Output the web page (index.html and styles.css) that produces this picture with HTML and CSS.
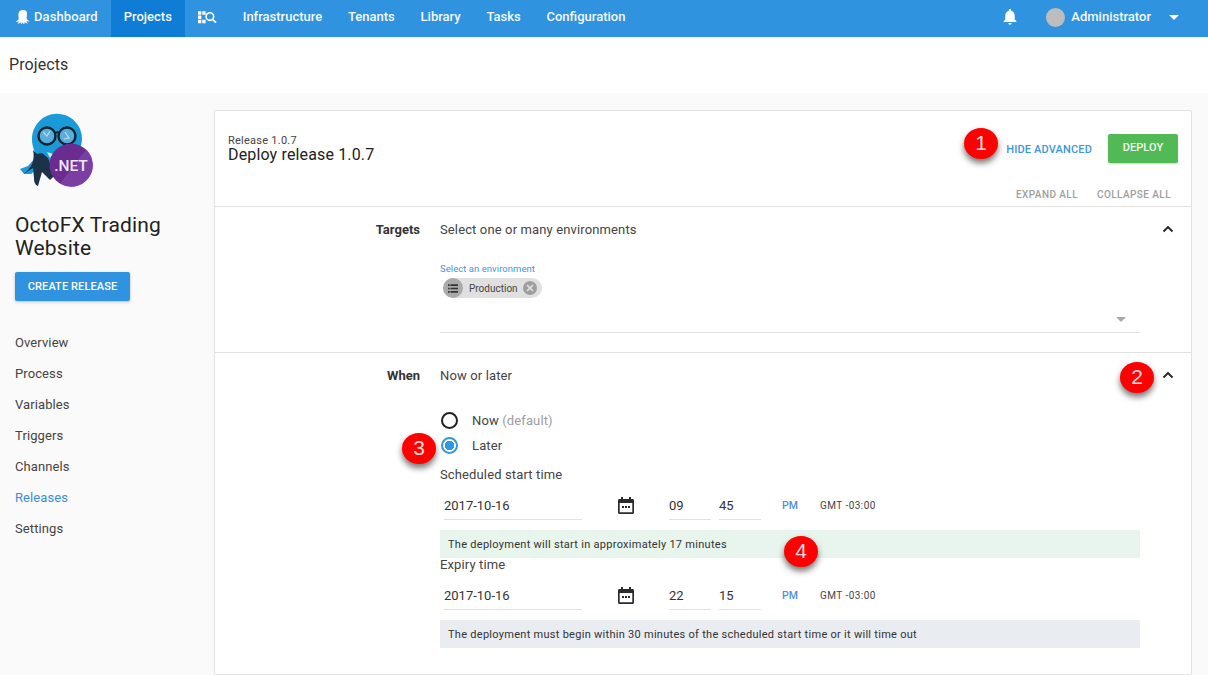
FILE: index.html
```html
<!DOCTYPE html>
<html lang="en">
<head>
<meta charset="utf-8">
<title>Deploy release 1.0.7</title>
<link rel="stylesheet" href="styles.css">
</head>
<body>
<nav class="nav">
  <a class="nav-item nav-first"><svg class="octo" viewBox="0 0 16 16"><path fill="#fff" d="M8 1C5 1 3.400 3 3.400 5.600c0 2 .5 3.100.2 4.300C3.300 11 2 11.800.6 12.200c.9.700 2.300.600 3.200.100-.2 1-.7 1.700-1.300 2.200 1.100.200 2.400-.300 3-1.300.2.800.5 1.500 1 1.900.6-.3 1-1 1.100-1.800.3.900.8 1.500 1.500 1.800.5-.5.700-1.200.7-2 .7 1 1.900 1.500 3 1.300-.700-.6-1.200-1.300-1.300-2.300.9.500 2.300.600 3.200-.1-1.400-.4-2.700-1.200-3-2.300-.3-1.200.3-2.300.2-4.300C12.600 3 11 1 8 1z"/></svg>Dashboard</a>
  <a class="nav-item nav-active">Projects</a>
  <a class="nav-item nav-icon"><svg class="nav-search" viewBox="0 0 20 14"><path fill="#fff" d="M0 1h3.500v3.500H0zM4.500 1H8v3.500H4.500zM0 5.500h3.500V9H0zM0 10h3.500v3.500H0zM4.500 10H8v3.500H4.500z"/><circle cx="12.500" cy="6.500" r="4" fill="none" stroke="#fff" stroke-width="1.700"/><path stroke="#fff" stroke-width="1.900" d="M15.300 9.500l3.700 3.500"/></svg></a>
  <a class="nav-item">Infrastructure</a>
  <a class="nav-item">Tenants</a>
  <a class="nav-item">Library</a>
  <a class="nav-item">Tasks</a>
  <a class="nav-item">Configuration</a>
  <div class="nav-right">
    <svg class="bell" viewBox="0 0 14 16"><path fill="#fff" d="M7 0c-.7 0-1.200.5-1.200 1.200v.5C3.700 2.300 2.300 4.200 2.300 6.500v3.800L.6 12.200V13h12.800v-.8l-1.700-1.900V6.500c0-2.300-1.400-4.200-3.500-4.800v-.5C8.200.5 7.700 0 7 0zM5.300 14c0 1 .8 1.700 1.700 1.700s1.700-.7 1.700-1.700z"/></svg>
    <span class="avatar"></span>
    <span class="nav-user">Administrator</span>
    <span class="nav-caret"></span>
  </div>
</nav>
<header class="title-bar">Projects</header>
<div class="layout">
  <aside class="sidebar">
    <svg class="logo" viewBox="0 0 80 76">
      <path fill="#1b9ad8" d="M2 56l8-3 7-8 4 10-8 6-7 0z"/>
      <path fill="#1b9ad8" d="M14 26a25 25 0 1 1 44 16L40 52 22 46c-5-5-8-12-8-20z"/>
      <circle cx="29" cy="23" r="8.500" fill="#5aaedb" stroke="#14232f" stroke-width="2.400"/>
      <circle cx="49" cy="23" r="8.500" fill="#5aaedb" stroke="#14232f" stroke-width="2.400"/>
      <path d="M25 19l4 4 3-5M47 19l4 6-5 1" fill="none" stroke="#bcdcf0" stroke-width="1.200"/>
      <path stroke="#14232f" stroke-width="2" d="M37 20c2-1 3-1 4 0" fill="none"/>
      <path fill="#1c3247" d="M15 37l4 4 5-1 6 5 7 17-5 5-8-8-4 14c-3-1-4-4-4-8l-1-10-9 6c3-3 6-6 8-10 2-5 2-9 1-14z"/>
      <path fill="#d8eefa" d="M29 39l6 2-3 4z"/>
      <circle cx="53" cy="52" r="21.500" fill="#6a2c91"/>
      <path fill="#7b3fa3" d="M68 36.500a21.500 21.500 0 0 1-26 34z"/>
      <text class="logo-text" x="53" y="58" text-anchor="middle">.NET</text>
    </svg>
    <h1 class="project-name">OctoFX Trading Website</h1>
    <a class="btn-create">CREATE RELEASE</a>
    <ul class="side-menu">
      <li>Overview</li>
      <li>Process</li>
      <li>Variables</li>
      <li>Triggers</li>
      <li>Channels</li>
      <li class="side-active">Releases</li>
      <li>Settings</li>
    </ul>
  </aside>
  <main class="card">
    <section class="card-head">
      <div class="head-titles">
        <div class="crumb">Release 1.0.7</div>
        <div class="head-title">Deploy release 1.0.7</div>
      </div>
      <div class="head-actions">
        <a class="link-advanced">HIDE ADVANCED</a>
        <a class="btn-deploy">DEPLOY</a>
      </div>
    </section>
    <div class="expand-row"><a>EXPAND ALL</a><a>COLLAPSE ALL</a></div>
    <section class="panel panel-targets">
      <div class="panel-row">
        <div class="panel-label">Targets</div>
        <div class="panel-summary">Select one or many environments</div>
        <svg class="chevron" viewBox="0 0 12 8"><path d="M1.500 6.500L6 2l4.500 4.500" fill="none" stroke="#222" stroke-width="1.800"/></svg>
      </div>
      <div class="panel-body">
        <div class="float-label">Select an environment</div>
        <div class="chip">
          <span class="chip-icon"><svg viewBox="0 0 12 10"><path fill="#333" d="M0 0h2v2H0zM3 0h9v2H3zM0 4h2v2H0zM3 4h9v2H3zM0 8h2v2H0zM3 8h9v2H3z"/></svg></span>
          <span class="chip-text">Production</span>
          <span class="chip-close"><svg viewBox="0 0 10 10"><path d="M2 2l6 6M8 2l-6 6" stroke="#e2e2e2" stroke-width="1.600"/></svg></span>
        </div>
        <div class="select-line"><span class="select-caret"></span></div>
      </div>
    </section>
    <section class="panel panel-when">
      <div class="panel-row">
        <div class="panel-label">When</div>
        <div class="panel-summary">Now or later</div>
        <svg class="chevron" viewBox="0 0 12 8"><path d="M1.500 6.500L6 2l4.500 4.500" fill="none" stroke="#222" stroke-width="1.800"/></svg>
      </div>
      <div class="panel-body when-body">
        <div class="radio-row"><span class="radio"></span><span>Now <span class="muted">(default)</span></span></div>
        <div class="radio-row"><span class="radio radio-on"></span><span>Later</span></div>
        <div class="field-title field-title-first">Scheduled start time</div>
        <div class="time-row">
          <div class="input input-date">2017-10-16</div>
          <svg class="cal" viewBox="0 0 16 17"><path fill="#2b2b2b" d="M3 0h2v2h6V0h2v2h1.500c.8 0 1.500.7 1.500 1.500v12c0 .8-.7 1.500-1.500 1.500h-13C.7 17 0 16.300 0 15.500v-12C0 2.700.7 2 1.500 2H3zM1.700 6v9.300h12.600V6zM4 9h2v2H4zM7 9h2v2H7zM10 9h2v2h-2z"/></svg>
          <div class="input input-time">09</div>
          <div class="input input-time">45</div>
          <div class="ampm">PM</div>
          <div class="tz">GMT -03:00</div>
        </div>
        <div class="note note-green">The deployment will start in approximately 17 minutes</div>
        <div class="field-title field-title-next">Expiry time</div>
        <div class="time-row">
          <div class="input input-date">2017-10-16</div>
          <svg class="cal" viewBox="0 0 16 17"><path fill="#2b2b2b" d="M3 0h2v2h6V0h2v2h1.500c.8 0 1.500.7 1.500 1.500v12c0 .8-.7 1.500-1.500 1.500h-13C.7 17 0 16.300 0 15.500v-12C0 2.700.7 2 1.500 2H3zM1.700 6v9.300h12.600V6zM4 9h2v2H4zM7 9h2v2H7zM10 9h2v2h-2z"/></svg>
          <div class="input input-time">22</div>
          <div class="input input-time">15</div>
          <div class="ampm">PM</div>
          <div class="tz">GMT -03:00</div>
        </div>
        <div class="note note-grey">The deployment must begin within 30 minutes of the scheduled start time or it will time out</div>
      </div>
    </section>
  </main>
</div>
<span class="badge badge-1">1</span>
<span class="badge badge-2">2</span>
<span class="badge badge-3">3</span>
<span class="badge badge-4">4</span>
</body>
</html>
```
FILE: styles.css
```css
* { box-sizing: border-box; }
html, body { margin: 0; padding: 0; height: 675px; overflow: hidden; }
body {
  position: relative;
  width: 1208px;
  font-family: Roboto, "Liberation Sans", sans-serif;
  color: #333;
  background: #fafafa;
}

/* top navigation */
.nav { display: flex; height: 37px; background: #2f93e0; color: #fff; }
.nav-item {
  display: flex;
  align-items: center;
  padding: 0 12.900px 4px;
  font-size: 13px;
  font-weight: 500;
  color: #f4f9fd;
}
.nav-first { padding-left: 15px; padding-right: 13px; letter-spacing: .1px; }
.octo { width: 16px; height: 16px; margin-right: 3px; }
.nav-active { background: #0f7cd6; padding-right: 13.200px; }
.nav-search { width: 19px; height: 14px; display: block; }
.nav-right { display: flex; align-items: center; margin-left: auto; padding: 0 29px 3px 0; }
.bell { width: 14px; height: 16px; margin-right: 29px; }
.avatar { width: 19px; height: 19px; border-radius: 50%; background: #bdbdbd; margin-right: 6px; }
.nav-user { font-size: 13px; font-weight: 500; color: #f4f9fd; margin-top: -1px; }
.nav-caret {
  width: 0;
  height: 0;
  margin-left: 18px;
  border-left: 5px solid transparent;
  border-right: 5px solid transparent;
  border-top: 5px solid #fff;
}

/* page title */
.title-bar {
  height: 56px;
  padding: 18px 0 0 9px;
  background: #fff;
  font-size: 16px;
  line-height: 19px;
  letter-spacing: .1px;
  color: #333;
}

/* layout */
.layout { display: flex; align-items: flex-start; padding-top: 18px; }
.sidebar { width: 215px; padding-left: 15px; flex: none; }
.logo { display: block; width: 80px; height: 76px; margin: 2px 0 0 3px; }
.logo-text { font: 500 15.500px Roboto, sans-serif; fill: #f1e9f6; }
.project-name {
  margin: 25px 0 0;
  width: 170px;
  font-size: 21px;
  font-weight: 400;
  line-height: 23px;
  letter-spacing: .15px;
  color: #222;
}
.btn-create {
  display: block;
  margin-top: 12px;
  width: 115px;
  height: 29px;
  background: #2f93e0;
  border-radius: 2px;
  box-shadow: 0 1px 3px rgba(0,0,0,.25);
  font-size: 11px;
  font-weight: 500;
  letter-spacing: .1px;
  line-height: 30px;
  text-align: center;
  color: #fff;
}
.side-menu { list-style: none; margin: 26px 0 0; padding: 0; font-size: 13px; letter-spacing: .1px; color: #444; }
.side-menu li { height: 31px; line-height: 31px; }
.side-menu .side-active { color: #3c8fd9; }

/* card */
.card {
  width: 976px;
  height: 563px;
  flex: none;
  background: #fff;
  border-radius: 1px;
  box-shadow: 0 0 0 1px #e2e2e2;
}
.card-head { display: flex; justify-content: space-between; height: 72px; padding: 24px 13px 0 13px; }
.crumb { font-size: 11px; line-height: 10px; letter-spacing: .25px; color: #444; margin-top: 1px; }
.head-title { font-size: 16px; line-height: 17px; letter-spacing: .15px; color: #222; }
.head-actions { display: flex; align-items: flex-start; margin-top: -1px; }
.link-advanced { font-size: 11px; font-weight: 500; line-height: 31px; letter-spacing: .15px; color: #3a97e0; margin-right: 16px; }
.btn-deploy {
  width: 70px;
  height: 29px;
  background: #52b957;
  border-radius: 2px;
  box-shadow: 0 1px 2px rgba(0,0,0,.2);
  font-size: 11px;
  font-weight: 500;
  letter-spacing: .1px;
  line-height: 28px;
  text-align: center;
  color: #f2faf2;
}
.expand-row {
  display: flex;
  justify-content: flex-end;
  gap: 19px;
  height: 23px;
  padding-right: 20px;
  font-size: 10px;
  font-weight: 500;
  line-height: 24px;
  letter-spacing: .42px;
  color: #9e9e9e;
}

/* panels */
.panel { border-top: 1px solid #e0e0e0; }
.panel-row { display: flex; align-items: center; height: 44px; }
.panel-label { width: 205px; text-align: right; font-size: 13px; font-weight: 700; color: #333; }
.panel-summary { margin-left: 20px; flex: 1; font-size: 13px; letter-spacing: .13px; color: #444; }
.chevron { width: 12px; height: 8px; margin-right: 17px; }
.panel-targets { height: 146px; }
.panel-body { margin-left: 225px; width: 700px; }
.float-label { margin-top: 12px; font-size: 9.500px; line-height: 11px; letter-spacing: .05px; color: #3d97e3; }
.chip {
  display: flex;
  align-items: center;
  width: 99px;
  height: 20px;
  margin: 4px 0 0 3px;
  background: #e0e0e0;
  border-radius: 10px;
}
.chip-icon {
  display: flex;
  align-items: center;
  justify-content: center;
  width: 20px;
  height: 20px;
  border-radius: 50%;
  background: #aaa;
}
.chip-icon svg { width: 10px; height: 9px; }
.chip-text { margin-left: 6px; font-size: 10px; color: #444; }
.chip-close {
  display: flex;
  align-items: center;
  justify-content: center;
  width: 14px;
  height: 14px;
  margin-left: 5px;
  border-radius: 50%;
  background: #9e9e9e;
}
.chip-close svg { width: 10px; height: 10px; }
.select-line { position: relative; height: 35px; border-bottom: 1px solid #e0e0e0; }
.select-caret {
  position: absolute;
  right: 14px;
  top: 19px;
  border-left: 5px solid transparent;
  border-right: 5px solid transparent;
  border-top: 5px solid #aaa;
}

/* when panel */
.when-body { padding-top: 11px; }
.radio-row { display: flex; align-items: center; height: 25px; font-size: 13px; letter-spacing: .13px; color: #444; }
.radio { width: 17px; height: 17px; margin: 0 14px 0 1px; border: 2px solid #222; border-radius: 50%; flex: none; }
.radio-on { border-color: #3297e3; background: radial-gradient(circle, #3297e3 0 4.500px, #fff 5px); }
.muted { color: #9e9e9e; }
.field-title { font-size: 13px; line-height: 15px; letter-spacing: .13px; color: #444; }
.field-title-first { margin-top: 9px; }
.field-title-next { margin-top: -1px; }
.time-row { display: flex; align-items: center; height: 46px; padding-top: 1px; }
.input {
  height: 29px;
  border-bottom: 1px solid #e0e0e0;
  font-size: 13px;
  line-height: 29px;
  color: #333;
}
.input-date { width: 138px; margin-left: 4px; }
.cal { width: 16px; height: 17px; margin: 0 35px 0 36px; }
.input-time { width: 42px; margin-right: 8px; }
.ampm { width: 38px; margin-left: 13px; font-size: 10.500px; font-weight: 500; color: #4f8fdc; }
.tz { font-size: 10px; font-weight: 400; letter-spacing: .45px; color: #444; }
.note { height: 28px; padding: 1px 0 0 8px; font-size: 11px; line-height: 28px; letter-spacing: .28px; color: #333; }
.note-green { background: #e8f5ec; margin-top: 2px; }
.note-grey { background: #e9ecf1; margin-top: 2px; }

/* numbered annotations */
.badge {
  position: absolute;
  width: 34px;
  height: 31px;
  border-radius: 50%;
  background: #f00;
  box-shadow: 0 4px 6px rgba(0,0,0,.55);
  font-family: "Liberation Sans", sans-serif;
  font-size: 21px;
  line-height: 30px;
  text-align: center;
  color: #f4dede;
}
.badge-1 { left: 964px; top: 128px; }
.badge-2 { left: 1120px; top: 362px; }
.badge-3 { left: 402px; top: 433px; }
.badge-4 { left: 784px; top: 536px; }
```
